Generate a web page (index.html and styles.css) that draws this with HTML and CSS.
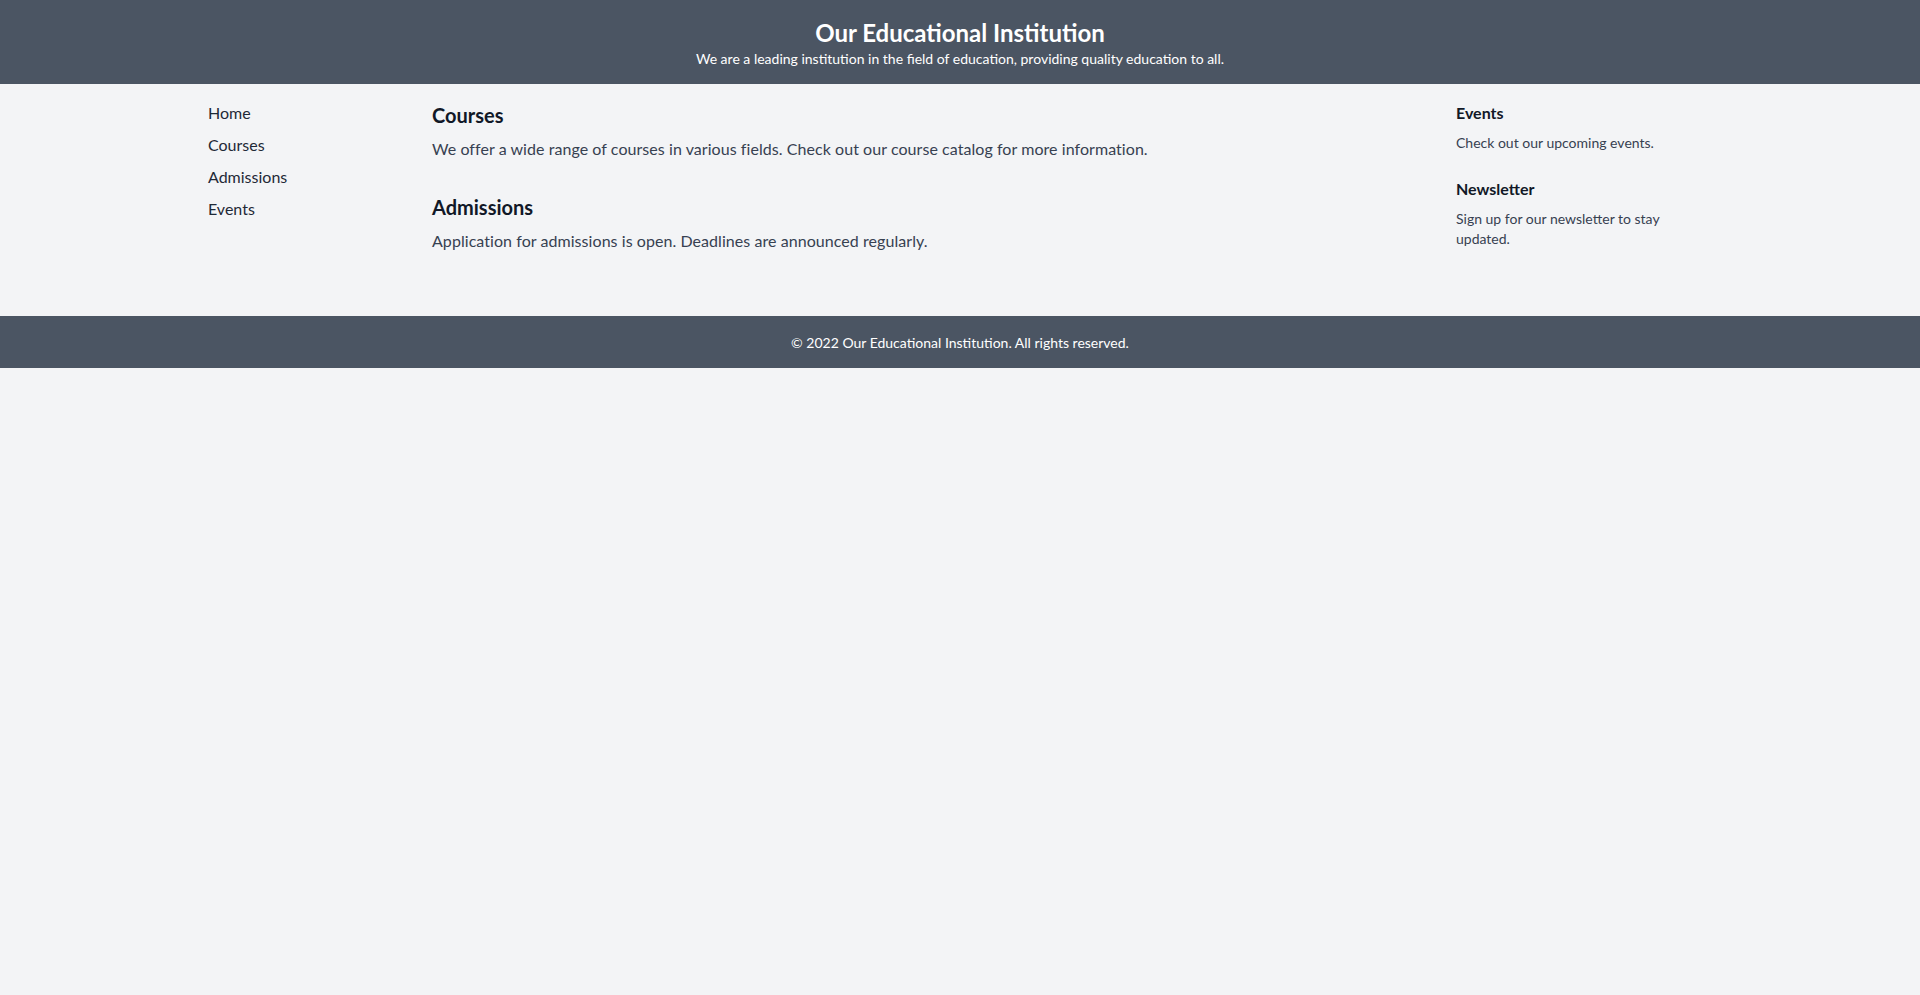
FILE: index.html
```html
<!DOCTYPE html>
<html lang="en">
<head>
<meta charset="utf-8">
<title>Our Educational Institution</title>
<link rel="stylesheet" href="styles.css">
</head>
<body>
<header class="site-header">
  <h1 class="site-title">Our Educational Institution</h1>
  <p class="site-tagline">We are a leading institution in the field of education, providing quality education to all.</p>
</header>
<div class="container">
  <nav class="side-nav">
    <ul class="nav-list">
      <li><a href="#" class="nav-link">Home</a></li>
      <li><a href="#" class="nav-link">Courses</a></li>
      <li><a href="#" class="nav-link">Admissions</a></li>
      <li><a href="#" class="nav-link">Events</a></li>
    </ul>
  </nav>
  <main class="content">
    <section class="section">
      <h2 class="section-title">Courses</h2>
      <p class="section-text">We offer a wide range of courses in various fields. Check out our course catalog for more information.</p>
    </section>
    <section class="section">
      <h2 class="section-title">Admissions</h2>
      <p class="section-text">Application for admissions is open. Deadlines are announced regularly.</p>
    </section>
  </main>
  <aside class="sidebar">
    <div class="widget">
      <h3 class="widget-title">Events</h3>
      <p class="widget-text">Check out our upcoming events.</p>
    </div>
    <div class="widget">
      <h3 class="widget-title">Newsletter</h3>
      <p class="widget-text">Sign up for our newsletter to stay updated.</p>
    </div>
  </aside>
</div>
<footer class="site-footer">
  <p class="footer-text">© 2022 Our Educational Institution. All rights reserved.</p>
</footer>
</body>
</html>
```
FILE: styles.css
```css
* { box-sizing: border-box; }
html, body { margin: 0; padding: 0; }
body {
  background: #f3f4f6;
  font-family: Lato, "Open Sans", sans-serif;
  color: #1f2937;
  min-height: 995px;
}
h1, h2, h3, p, ul { margin: 0; padding: 0; }
ul { list-style: none; }

.site-header {
  background: #4b5563;
  color: #ffffff;
  text-align: center;
  padding: 17px 16px 15px;
  height: 84px;
}
.site-title {
  font-size: 24px;
  line-height: 32px;
  font-weight: 700;
}
.site-tagline {
  font-size: 14px;
  line-height: 20px;
}

.container {
  max-width: 1536px;
  margin: 0 auto;
  padding: 17px 16px 0;
  display: flex;
  gap: 32px;
  height: 232px;
}
.side-nav { width: 192px; flex-shrink: 0; }
.nav-list { display: flex; flex-direction: column; gap: 8px; }
.nav-link {
  color: #1f2937;
  text-decoration: none;
  font-size: 16px;
  line-height: 24px;
}

.content { flex: 1; }
.section { margin-bottom: 32px; }
.section-title {
  font-size: 20px;
  line-height: 28px;
  font-weight: 700;
  color: #111827;
  margin-bottom: 8px;
}
.section-text {
  font-size: 16px;
  line-height: 24px;
  color: #374151;
  letter-spacing: 0.06px;
}

.sidebar { width: 256px; flex-shrink: 0; }
.widget { margin-bottom: 24px; }
.widget-title {
  font-size: 16px;
  line-height: 24px;
  font-weight: 700;
  color: #111827;
  margin-bottom: 8px;
}
.widget-text {
  font-size: 14px;
  line-height: 20px;
  color: #374151;
}

.site-footer {
  background: #4b5563;
  color: #ffffff;
  text-align: center;
  padding: 17px 16px 15px;
  height: 52px;
}
.footer-text { font-size: 14px; line-height: 20px; }
```
